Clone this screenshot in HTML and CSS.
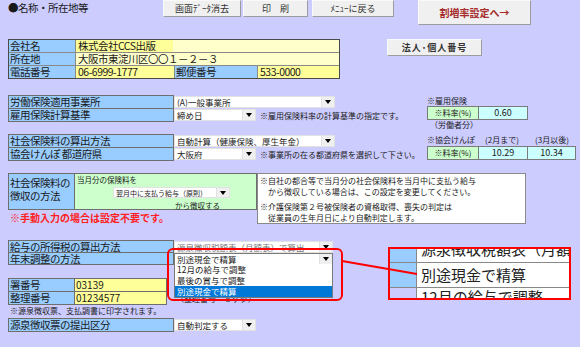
FILE: index.html
```html
<!DOCTYPE html>
<html>
<head>
	<meta charset="utf-8">
	<title>名称・所在地等</title>
	<link rel="stylesheet" href="styles.css">
</head>
<body>
<div class="page">
	<div class="topbar">
		<div class="title">●名称・所在地等</div>
		<button class="btn btn-clear">画面ﾃﾞｰﾀ消去</button>
		<button class="btn btn-print">印　刷</button>
		<button class="btn btn-menu">ﾒﾆｭｰに戻る</button>
		<button class="btn btn-rate">割増率設定へ→</button>
	</div>

	<!-- 会社情報 -->
	<div class="company-row">
		<div class="company">
			<div class="c-lab">会社名</div>
			<div class="c-val span3 name">株式会社CCS出版</div>
			<div class="c-lab">所在地</div>
			<div class="c-val span3 pale">大阪市東淀川区〇〇１－２－３</div>
			<div class="c-lab">電話番号</div>
			<div class="c-val">06-6999-1777</div>
			<div class="c-lab">郵便番号</div>
			<div class="c-val">533-0000</div>
		</div>
		<button class="btn btn-number">法人･個人番号</button>
	</div>

	<!-- 労働保険 -->
	<div class="sec sec-labour">
		<div class="left">
			<div class="row">
				<div class="lab lab-wide">労働保険適用事業所</div>
				<div class="select w161"><span class="val">(A)一般事業所</span><span class="arrow"></span></div>
			</div>
			<div class="row">
				<div class="lab lab-wide">雇用保険計算基準</div>
				<div class="select w82"><span class="val">締め日</span><span class="arrow"></span></div>
				<span class="hint">※雇用保険料率の計算基準の指定です。</span>
			</div>
		</div>
		<div class="side">
			<div class="side-head">※雇用保険</div>
			<div class="rates">
				<div class="rate rate-key">※料率(%)</div>
				<div class="rate rate-val">0.60</div>
			</div>
			<div class="side-foot">（労働者分）</div>
		</div>
	</div>

	<!-- 社会保険 -->
	<div class="sec sec-social">
		<div class="left">
			<div class="row">
				<div class="lab lab-wide">社会保険料の算出方法</div>
				<div class="select w161"><span class="val">自動計算（健康保険、厚生年金）</span><span class="arrow"></span></div>
			</div>
			<div class="row">
				<div class="lab lab-wide">協会けんぽ 都道府県</div>
				<div class="select w82"><span class="val">大阪府</span><span class="arrow"></span></div>
				<span class="hint">※事業所の在る都道府県を選択して下さい。</span>
			</div>
		</div>
		<div class="side">
			<div class="side-head heads">
				<span class="h1">※協会けんぽ</span>
				<span class="h2">(2月まで)</span>
				<span>(3月以後)</span>
			</div>
			<div class="rates">
				<div class="rate rate-key">※料率(%)</div>
				<div class="rate rate-val">10.29</div>
				<div class="rate rate-val last">10.34</div>
			</div>
		</div>
	</div>

	<!-- 徴収の方法 -->
	<div class="sec sec-collect">
		<div class="collect-col">
			<div class="collect">
				<div class="collect-lab">社会保険料の<br>徴収の方法</div>
				<div class="collect-body">
					<div class="lead">当月分の保険料を</div>
					<div class="select w117"><span class="val">翌月中に支払う給与（原則）</span><span class="arrow"></span></div>
					<div class="tail">から徴収する</div>
				</div>
			</div>
			<div class="warn">※手動入力の場合は設定不要です。</div>
		</div>
		<div class="note">
			<p>※自社の都合等で当月分の社会保険料を当月中に支払う給与<br>　から徴収している場合は、この設定を変更してください。</p>
			<p>※介護保険第２号被保険者の資格取得、喪失の判定は<br>　従業員の生年月日により自動判定します。</p>
		</div>
	</div>

	<!-- 所得税 -->
	<div class="sec sec-tax">
		<div class="left">
			<div class="row">
				<div class="lab lab-wide">給与の所得税の算出方法</div>
				<div class="select w159 faded"><span class="val">源泉徴収税額表（月額表）で算出</span><span class="arrow"></span></div>
			</div>
			<div class="row">
				<div class="lab lab-wide">年末調整の方法</div>
				<div class="select w159 open"><span class="val">別途現金で精算</span><span class="arrow"></span></div>
			</div>
		</div>
	</div>

	<!-- 署番号 -->
	<div class="sec sec-office">
		<div class="left">
			<div class="row">
				<div class="lab lab-narrow">署番号</div>
				<div class="yellow">03139</div>
			</div>
			<div class="row">
				<div class="lab lab-narrow">整理番号</div>
				<div class="yellow">01234577</div>
				<span class="hint digits">（整理番号　８ケタ）</span>
			</div>
			<div class="small-note">※源泉徴収票、支払調書に印字されます。</div>
		</div>
	</div>

	<!-- 提出区分 -->
	<div class="sec sec-submit">
		<div class="row">
			<div class="lab lab-wide">源泉徴収票の提出区分</div>
			<div class="select w82"><span class="val">自動判定する</span><span class="arrow"></span></div>
		</div>
	</div>

	<!-- 開いたドロップダウン -->
	<ul class="dropdown">
		<li>12月の給与で調整</li>
		<li>最後の賞与で調整</li>
		<li class="on">別途現金で精算</li>
	</ul>

	<!-- 拡大表示 -->
	<div class="callout">
		<div class="co-lab"></div>
		<div class="co-val co-top"><span>源泉徴収税額表（月額表）で算出</span></div>
		<div class="co-lab"></div>
		<div class="co-val co-mid">別途現金で精算</div>
		<div class="co-lab pale"></div>
		<div class="co-val co-bot"><span>12月の給与で調整</span></div>
	</div>

	<div class="focus-ring"></div>
	<svg class="pointer" width="580" height="347" viewBox="0 0 580 347">
		<line x1="342" y1="261" x2="417" y2="274" stroke="#ff0000" stroke-width="2"/>
	</svg>
</div>
</body>
</html>
```

FILE: styles.css
```css
/* base */
body {
	margin: 0;
	padding: 0;
	font-family: "Noto Sans CJK JP", "Noto Sans", sans-serif;
	background-color: #ccccff;
	color: #1a1a1a;
}
.page {
	position: relative;
	width: 580px;
	height: 347px;
	overflow: hidden;
}

/* top buttons */
.topbar {
	display: flex;
	align-items: flex-start;
	height: 39px;
}
.title {
	width: 163px;
	box-sizing: border-box;
	padding: 1px 0 0 8px;
	font-size: 10.5px;
	letter-spacing: -0.5px;
	line-height: 14px;
}
.btn {
	font-family: inherit;
	font-size: 9px;
	color: #333;
	background-color: #f0f0f0;
	border: 1px solid;
	border-color: #fafafa #9c9c9c #9c9c9c #fafafa;
	height: 17px;
	padding: 0;
	line-height: 14px;
}
.btn-clear { width: 78px; }
.btn-print { width: 65px; margin-left: 2px; }
.btn-menu { width: 82px; margin-left: 4px; }
.btn-rate {
	width: 113px;
	height: 25px;
	margin-left: 24px;
	color: #a52a2a;
	font-weight: bold;
	font-size: 10px;
}

/* company */
.company-row {
	display: flex;
	align-items: flex-start;
	height: 40px;
	margin-left: 8px;
}
.company {
	display: grid;
	grid-template-columns: 66px 98px 82px 81px;
	grid-template-rows: repeat(3, 12px);
	gap: 1px;
	background-color: #8a8a8a;
	border: 1px solid #4a4a4a;
	font-size: 10.5px;
	letter-spacing: -0.5px;
	line-height: 12px;
}
.c-lab {
	background-color: #99ccff;
	padding-left: 1px;
	white-space: nowrap;
}
.c-val {
	background-color: #ffff99;
	padding-left: 2px;
	white-space: nowrap;
}
.span3 { grid-column: span 3; }
.c-val.name { background: linear-gradient(to right, #ffff99 97px, #ffffcc 97px); }
.c-val.pale { background-color: #ffffcc; }
.btn-number {
	width: 95px;
	margin-left: 47px;
	font-weight: bold;
	font-size: 9px;
	letter-spacing: 1px;
}

/* label rows */
.sec {
	display: flex;
	align-items: flex-start;
	margin-left: 8px;
}
.left { width: 419px; }
.row {
	display: flex;
	align-items: center;
}
.row + .row { margin-top: -1px; }
.lab {
	box-sizing: border-box;
	height: 14px;
	background-color: #99ccff;
	border: 1px solid #6e6e6e;
	padding-left: 1px;
	font-size: 10.5px;
	letter-spacing: -0.5px;
	line-height: 12px;
	white-space: nowrap;
}
.lab-wide { width: 166px; }
.lab-narrow { width: 67px; }
.hint {
	margin-left: 4px;
	font-size: 8px;
	white-space: nowrap;
}

/* select boxes */
.select {
	display: flex;
	align-items: center;
	box-sizing: border-box;
	height: 12px;
	background-color: #fff;
	border: 1px solid #e2e2e2;
	font-size: 8.5px;
	line-height: 10px;
	white-space: nowrap;
}
.select .val {
	flex: 1;
	overflow: hidden;
	padding-left: 2px;
}
.select .arrow {
	position: relative;
	width: 12px;
	height: 10px;
	background-color: #f0f0f0;
	border-left: 1px solid #e2e2e2;
}
.select .arrow::after {
	content: "";
	position: absolute;
	left: 3px;
	top: 3px;
	border-top: 4px solid #000;
	border-left: 3px solid transparent;
	border-right: 3px solid transparent;
}
.w161 { width: 161px; }
.w159 { width: 159px; }
.w117 { width: 117px; }
.w82 { width: 82px; }
.select.faded .val { color: #777; }
.select.open { border-color: #7a7a7a; }

/* rate boxes on the right */
.side { font-size: 8px; }
.side-head {
	height: 11px;
	line-height: 11px;
	white-space: nowrap;
}
.heads { display: flex; height: 12px; }
.heads .h1 { width: 58px; }
.heads .h2 { width: 50px; }
.rates { display: flex; }
.rate {
	box-sizing: border-box;
	height: 14px;
	border: 1px solid #7a7a7a;
	text-align: center;
	line-height: 12px;
}
.rate + .rate { margin-left: -1px; }
.rate-key { width: 52px; background-color: #ccffcc; }
.rate-val { width: 50px; background-color: #ccffff; font-size: 9px; }
.rate-val.last { width: 49px; }
.side-foot {
	padding-left: 3px;
	line-height: 10px;
}

.sec-labour { margin-top: 16px; height: 28px; }
.sec-social { margin-top: 11px; height: 27px; }
.sec-collect { margin-top: 12px; height: 51px; }
.sec-tax { margin-top: 16px; height: 25px; }
.sec-tax .row { height: 13px; }
.sec-tax .lab { height: 13px; line-height: 11px; }
.sec-office { margin-top: 13px; height: 36px; }
.sec-submit { margin-top: 4px; }

/* collect method */
.collect-col { width: 249px; }
.collect {
	display: flex;
	box-sizing: border-box;
	height: 37px;
	border: 1px solid #6e6e6e;
}
.collect-lab {
	width: 66px;
	box-sizing: border-box;
	background-color: #99ccff;
	border-right: 1px solid #6e6e6e;
	padding: 2px 0 0 1px;
	font-size: 10.5px;
	letter-spacing: -0.5px;
	line-height: 13px;
}
.collect-body {
	flex: 1;
	background-color: #ccffcc;
	font-size: 7.5px;
	line-height: 10px;
}
.collect-body .lead { padding: 1px 0 0 2px; }
.collect-body .select { margin: 2px 0 0 38px; height: 11px; font-size: 7px; }
.collect-body .select .arrow { height: 9px; }
.collect-body .tail { margin: 3px 0 0 100px; }
.warn {
	margin-top: 2px;
	padding-left: 2px;
	color: #ff2020;
	font-weight: bold;
	font-size: 10px;
	line-height: 12px;
}
.note {
	box-sizing: border-box;
	width: 269px;
	height: 51px;
	background-color: #fff;
	border: 1px solid #8a8a8a;
	padding: 1px 0 0 2px;
	font-size: 8px;
	line-height: 11px;
}
.note p { margin: 0 0 4px; }

/* office number */
.yellow {
	box-sizing: border-box;
	width: 93px;
	height: 14px;
	margin-left: -1px;
	background-color: #ffff99;
	border: 1px solid #6e6e6e;
	padding-left: 1px;
	font-size: 10px;
	line-height: 12px;
}
.hint.digits { margin-left: 9px; }
.small-note {
	padding-left: 2px;
	font-size: 8px;
	line-height: 11px;
	white-space: nowrap;
}

/* open dropdown list */
.dropdown {
	position: absolute;
	left: 174px;
	top: 264px;
	width: 159px;
	margin: 0;
	padding: 0;
	list-style: none;
	box-sizing: border-box;
	background-color: #fff;
	border: 1px solid #7a7a7a;
	border-top: none;
	font-size: 8.5px;
}
.dropdown li {
	height: 11px;
	line-height: 11px;
	padding-left: 2px;
}
.dropdown li.on {
	background-color: #0078d7;
	color: #fff;
}

/* magnified callout */
.callout {
	position: absolute;
	left: 388px;
	top: 247px;
	width: 183px;
	height: 53px;
	box-sizing: border-box;
	display: grid;
	grid-template-columns: 26px 1fr;
	grid-template-rows: 13px 24px 10px;
	gap: 1px;
	background-color: #888;
	border: 2px solid #ff0000;
	overflow: hidden;
	font-size: 15px;
	color: #222;
}
.co-lab { background-color: #99ccff; }
.co-lab.pale { background-color: #ccccff; }
.co-val {
	background-color: #fff;
	padding-left: 4px;
	white-space: nowrap;
	overflow: hidden;
}
.co-top span { display: block; margin-top: -10px; line-height: 20px; }
.co-mid { line-height: 24px; }
.co-bot span { display: block; margin-top: 0; line-height: 18px; }

.focus-ring {
	position: absolute;
	left: 167px;
	top: 248px;
	width: 176px;
	height: 53px;
	box-sizing: border-box;
	border: 2px solid #ff0000;
	border-radius: 6px;
}
.pointer {
	position: absolute;
	left: 0;
	top: 0;
}
```
